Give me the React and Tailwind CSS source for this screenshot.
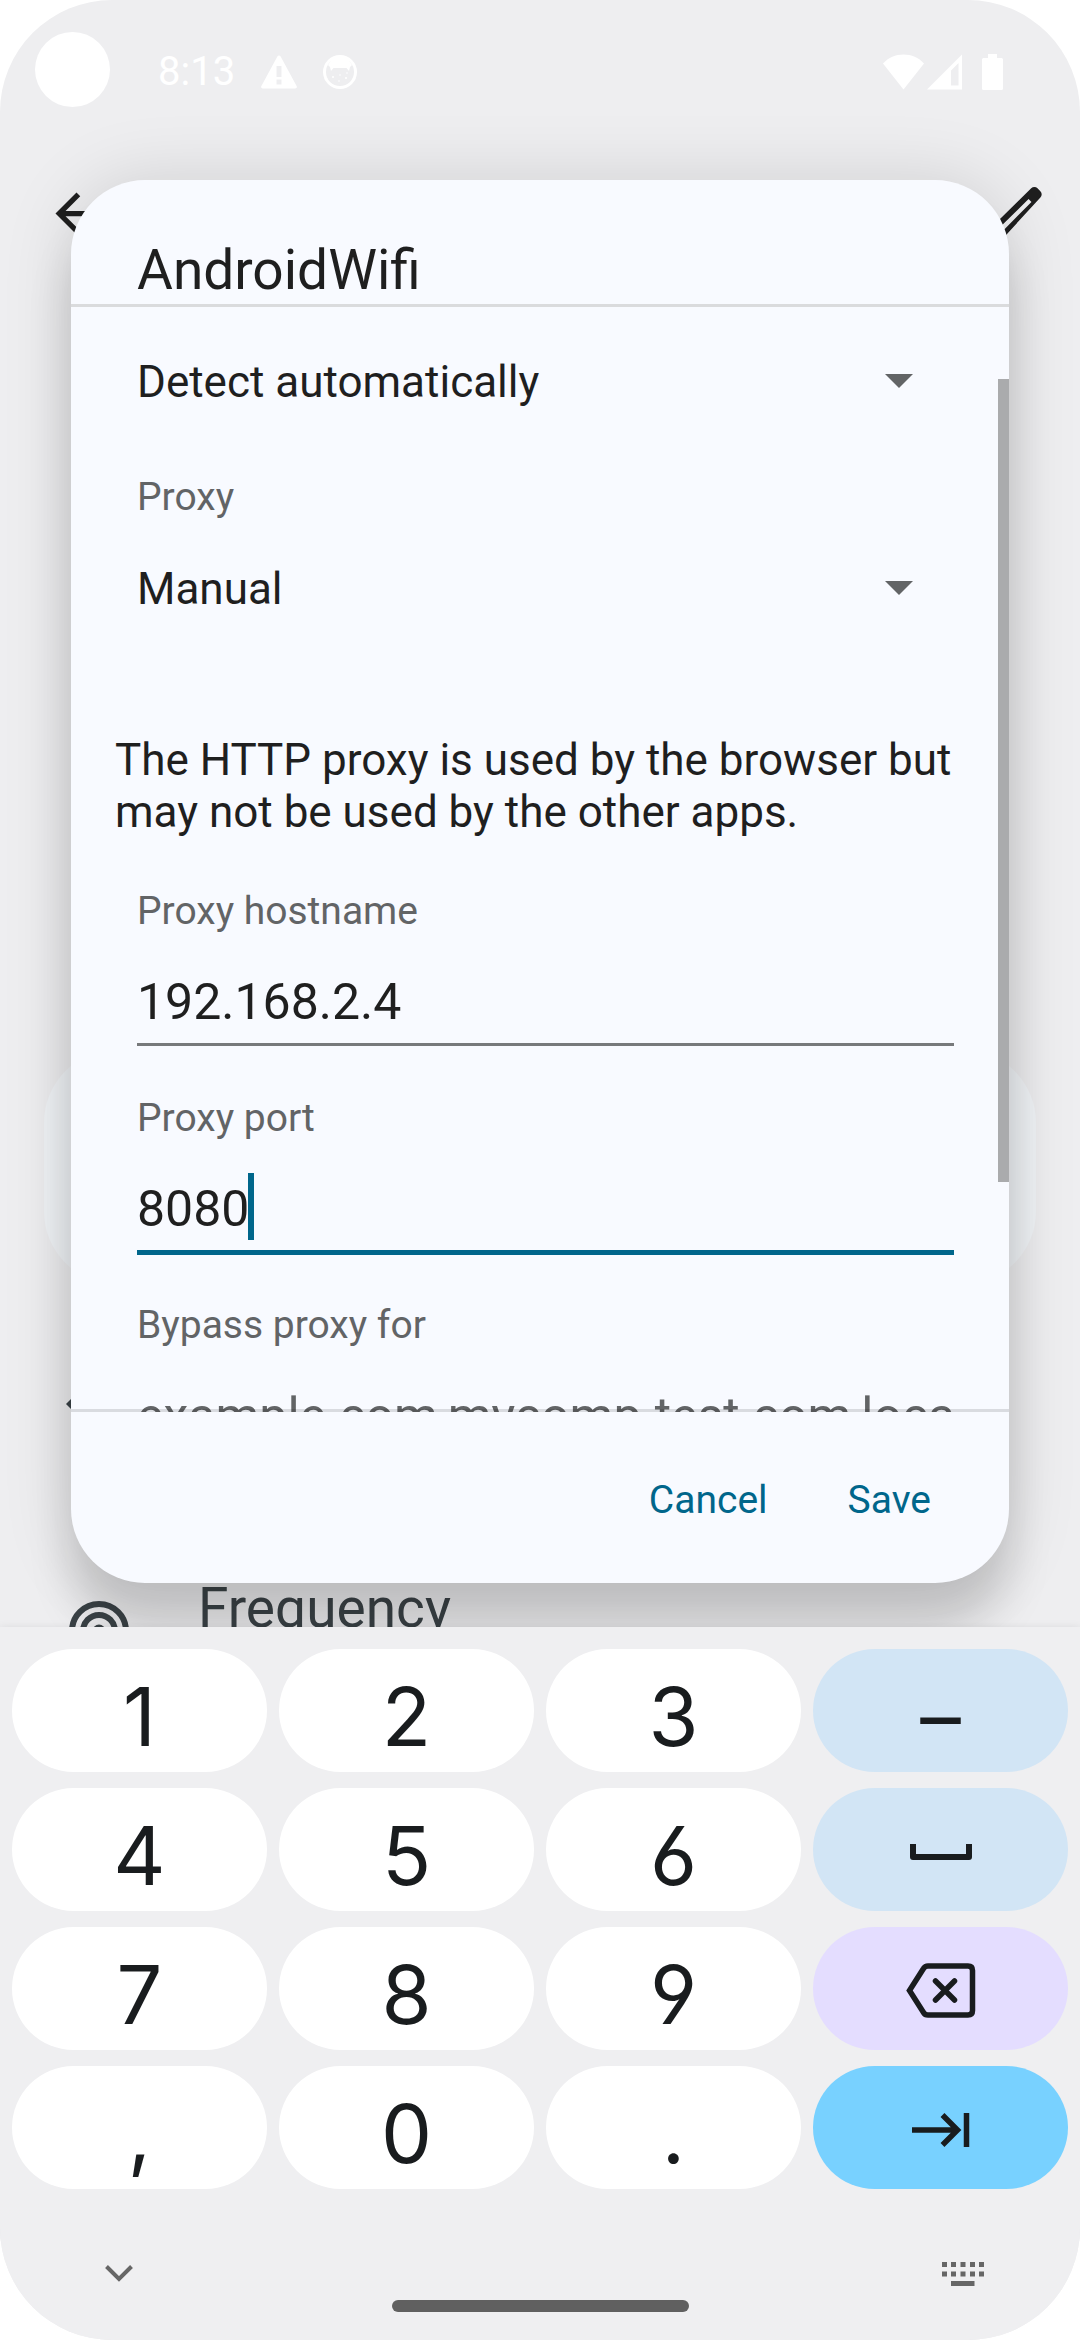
import React from "react";

function StatusBar() {
  return (
    <div className="flex h-[144px] shrink-0 items-center pl-[35px] pr-[77px] text-white">
      <div className="mt-[32px] size-[75px] shrink-0 self-start rounded-full bg-white" />
      <span className="ml-[48px] text-[40px] leading-[48px]">8:13</span>
      <svg className="ml-[26px] h-[34px] w-[36px]" viewBox="0 0 36 34" fill="currentColor" aria-hidden="true">
        <path
          fillRule="evenodd"
          d="M16.500 1.200a1.800 1.800 0 0 1 3 0L35.600 31c.7 1.400 0 2.400-1.400 2.400H1.800C.4 33.400-.3 32.400.4 31ZM15.500 11v11h5V11Zm0 13.500v5h5v-5Z"
        />
      </svg>
      <svg className="ml-[26px] size-[34px]" viewBox="0 0 34 34" fill="currentColor" aria-hidden="true">
        <circle cx="17" cy="17" r="15.500" fill="none" stroke="currentColor" strokeWidth="3" />
        <path d="M5 10 9 4 17 2l8 2 4 6-2 2-1 4-2.500-3h-13L8 16l-1-4Z" />
        <circle cx="10" cy="22" r="1" />
        <circle cx="17" cy="20" r=".8" />
        <circle cx="23" cy="23" r="1" />
        <circle cx="16" cy="26" r=".8" />
        <circle cx="24" cy="18" r=".8" />
      </svg>
      <div className="ml-auto flex items-center">
        <svg className="h-[36px] w-[41px]" viewBox="0 0 41 36" fill="currentColor" aria-hidden="true">
          <path d="M0 9.500C5.500 3.500 12.500.5 20.500.5S35.500 3.500 41 9.500L20.500 35.500Z" />
        </svg>
        <svg className="ml-[3px] h-[36px] w-[35px]" viewBox="0 0 35 36" fill="currentColor" aria-hidden="true">
          <path fillRule="evenodd" d="M35 .5V35.500H0ZM31.500 9 24 16.500V31.500h7.500Z" />
        </svg>
        <svg className="ml-[20px] h-[36px] w-[21px]" viewBox="0 0 21 36" fill="currentColor" aria-hidden="true">
          <path d="M6 0h9v4h4.500A1.500 1.500 0 0 1 21 5.500v29a1.500 1.500 0 0 1-1.500 1.500h-18A1.500 1.500 0 0 1 0 34.500v-29A1.500 1.500 0 0 1 1.500 4H6Z" />
        </svg>
      </div>
    </div>
  );
}

function NetworkDetailsPage() {
  return (
    <div className="flex min-h-0 flex-col overflow-hidden text-[#3b4347] [grid-area:1/1]">
      <StatusBar />
      <div className="flex h-[138px] shrink-0 items-center justify-between pl-[45px] pr-[32px] text-[#1f1f1f]">
        <button type="button" aria-label="Back">
          <svg className="size-[63px]" viewBox="0 0 24 24" fill="currentColor" aria-hidden="true">
            <path d="M20 11H7.830l5.590-5.590L12 4l-8 8 8 8 1.410-1.410L7.830 13H20Z" />
          </svg>
        </button>
        <button type="button" aria-label="Edit">
          <svg className="size-[63px]" viewBox="0 0 24 24" fill="currentColor" aria-hidden="true">
            <path
              fillRule="evenodd"
              d="M3 21v-4.250L17.600 2.400a1.700 1.700 0 0 1 2.400 0l1.100 1.100a1.700 1.700 0 0 1 0 2.400L7.250 21ZM5 19h1.400L17.700 7.600 16.600 6.500 5 17.900Z"
            />
          </svg>
        </button>
      </div>
      <div className="mx-[44px] mt-[767px] h-[236px] shrink-0 rounded-[74px] bg-[#f1f4f7]" />
      <div className="mt-[85px] flex h-[68px] shrink-0 items-center pl-[66px]">
        <svg className="size-[64px]" viewBox="0 0 64 64" fill="currentColor" aria-hidden="true">
          <path d="M0 32 32 0l32 32-32 32Z" />
        </svg>
      </div>
      <div className="mt-[138px] flex h-[110px] shrink-0 items-start gap-[69px] pl-[69px]">
        <svg className="mt-[25px] size-[60px]" viewBox="0 0 60 60" aria-hidden="true">
          <g fill="none" stroke="currentColor" strokeWidth="6">
            <circle cx="30" cy="30" r="27" />
            <circle cx="30" cy="30" r="16" />
          </g>
          <circle cx="30" cy="30" r="6.500" fill="currentColor" />
        </svg>
        <span className="text-[55px] leading-[64px]">Frequency</span>
      </div>
    </div>
  );
}

function Dropdown({ id, label, value }) {
  return (
    <div className="relative">
      <select
        id={id}
        aria-label={label}
        defaultValue={value}
        className="h-[100px] w-full appearance-none bg-transparent text-[44px] text-[#1f1f1f] outline-none"
      >
        <option>{value}</option>
      </select>
      <svg
        className="pointer-events-none absolute right-[41px] top-[42px] h-[14px] w-[28px]"
        viewBox="0 0 28 14"
        fill="#626466"
        aria-hidden="true"
      >
        <path d="M0 0h28L14 14Z" />
      </svg>
    </div>
  );
}

function Field({ id, label, value, placeholder, active }) {
  return (
    <div className="h-[207px] shrink-0">
      <label htmlFor={id} className="block text-[39px] leading-[50px] text-[#626466]">
        {label}
      </label>
      <div className="relative mt-[25px]">
        <input
          id={id}
          type="text"
          defaultValue={value}
          placeholder={placeholder}
          className={
            "block w-full bg-transparent text-[50px] text-[#1f1f1f] outline-none placeholder:text-[#626466] " +
            (active ? "h-[87px] border-b-[5px] border-[#00668b]" : "h-[85px] border-b-[3px] border-[#77797b]")
          }
        />
        {active && <span className="absolute left-[111px] top-[5px] h-[67px] w-[6px] bg-[#00668b]" />}
      </div>
    </div>
  );
}

function ProxyDialog() {
  return (
    <div
      role="dialog"
      aria-labelledby="dialog-title"
      className="relative z-10 mx-[71px] mb-[44px] mt-[180px] flex min-h-0 flex-col overflow-hidden rounded-[74px] bg-[#f8faff] shadow-[0_0_70px_rgba(0,0,0,0.13),0_48px_44px_rgba(0,0,0,0.15)] [grid-area:1/1]"
    >
      <header className="shrink-0 border-b-[3px] border-[#dadbdd] px-[66px] pb-[2px] pt-[58px]">
        <h1 id="dialog-title" className="text-[55px] leading-[64px] text-[#1f1f1f]">
          AndroidWifi
        </h1>
      </header>
      <div className="relative min-h-0 flex-1 overflow-hidden">
        <div className="flex flex-col pl-[66px] pr-[55px] pt-[25px]">
          <Dropdown id="metered" label="Metered" value="Detect automatically" />
          <label htmlFor="proxy" className="mb-[17px] mt-[40px] block text-[39px] leading-[50px] text-[#626466]">
            Proxy
          </label>
          <Dropdown id="proxy" label="Proxy" value="Manual" />
          <p className="-ml-[22px] mb-[48px] mt-[95px] text-[44px] leading-[52px] text-[#1f1f1f]">
            The HTTP proxy is used by the browser but may not be used by the other apps.
          </p>
          <Field id="hostname" label="Proxy hostname" value="192.168.2.4" />
          <Field id="port" label="Proxy port" value="8080" active />
          <Field id="bypass" label="Bypass proxy for" placeholder="example.com,mycomp.test.com,localhost" />
        </div>
        <div className="absolute right-0 top-[72px] h-[803px] w-[11px] bg-[#aaabad]" />
      </div>
      <footer className="relative -mt-[3px] flex h-[174px] shrink-0 items-center justify-end gap-[32px] border-t-[3px] border-black/12 pr-[54px] pt-[6px] text-[39px] text-[#00668b]">
        <button type="button" className="h-[96px] px-[24px]">
          Cancel
        </button>
        <button type="button" className="h-[96px] px-[24px]">
          Save
        </button>
      </footer>
    </div>
  );
}

function SpaceIcon() {
  return (
    <svg className="h-[16px] w-[62px]" viewBox="0 0 62 16" aria-hidden="true">
      <path d="M3 0v13h56V0" fill="none" stroke="currentColor" strokeWidth="6" strokeLinejoin="round" />
    </svg>
  );
}

function BackspaceIcon() {
  return (
    <svg className="h-[55px] w-[70px]" viewBox="0 0 70 55" fill="none" stroke="currentColor" strokeWidth="5.500" aria-hidden="true">
      <path d="M3.500 27.500 17.500 5.500Q19 3 22 3H62Q66.500 3 66.500 7.500V47.500Q66.500 52 62 52H22Q19 52 17.500 49.500Z" />
      <path d="M29.500 18 48.500 37M48.500 18 29.500 37" strokeLinecap="round" />
    </svg>
  );
}

function NextIcon() {
  return (
    <svg className="h-[34px] w-[60px]" viewBox="0 0 60 34" fill="none" stroke="currentColor" strokeWidth="5.500" aria-hidden="true">
      <path d="M1 17H46M31.500 2 46.500 17 31.500 32M55.500 0V34" />
    </svg>
  );
}

const KEYS = [
  ["1", "2", "3", "–"],
  ["4", "5", "6", "space"],
  ["7", "8", "9", "backspace"],
  [",", "0", ".", "next"],
];

const KEY_COLORS = {
  "–": "bg-[#d2e5f5]",
  space: "bg-[#d2e5f5]",
  backspace: "bg-[#e4ddff]",
  next: "bg-[#78d1ff]",
};

const KEY_ICONS = { space: <SpaceIcon />, backspace: <BackspaceIcon />, next: <NextIcon /> };

function Keyboard() {
  return (
    <div className="z-20 shrink-0 bg-[#efeff1] px-[12px] pt-[22px] shadow-[0_0_8px_rgba(0,0,0,0.08)]">
      <div className="grid grid-cols-4 gap-x-[12px] gap-y-[16px] font-['Inter',sans-serif] text-[81px] text-[#191c1e] [font-feature-settings:'cv03','cv04']">
        {KEYS.flat().map((key) => (
          <button
            key={key}
            type="button"
            aria-label={key}
            className={
              "flex h-[123px] items-center justify-center rounded-full pt-[4px] " + (KEY_COLORS[key] || "bg-white")
            }
          >
            {KEY_ICONS[key] || <span className="pt-[8px] leading-[100px]">{key}</span>}
          </button>
        ))}
      </div>
      <div className="grid h-[151px] grid-cols-3 items-start px-[84px] text-[#666]">
        <button type="button" aria-label="Hide keyboard" className="mt-[76px] justify-self-start pl-[9px]">
          <svg className="h-[17px] w-[28px]" viewBox="0 0 28 17" fill="none" stroke="currentColor" strokeWidth="4" aria-hidden="true">
            <path d="M1.500 1.500 14 14 26.500 1.500" />
          </svg>
        </button>
        <div className="mt-[111px] h-[12px] w-[297px] justify-self-center rounded-full bg-[#606060]" />
        <button type="button" aria-label="Switch keyboard" className="mt-[73px] justify-self-end">
          <svg className="h-[24px] w-[42px]" viewBox="0 0 42 24" fill="currentColor" aria-hidden="true">
            <path d="M0 0h5v5H0ZM9 0h5v5H9ZM18.500 0h5v5h-5ZM28 0h5v5h-5ZM37 0h5v5h-5ZM0 9.500h5v5H0ZM9 9.500h5v5H9ZM18.500 9.500h5v5h-5ZM28 9.500h5v5h-5ZM37 9.500h5v5h-5ZM9 19h23.500v5H9Z" />
          </svg>
        </button>
      </div>
    </div>
  );
}

export default function App() {
  return (
    <div className="h-screen bg-white">
      <main className="flex h-full flex-col overflow-hidden rounded-[112px] bg-[#eeeef0] font-['Roboto',sans-serif]">
        <div className="grid min-h-0 flex-1 grid-cols-1 grid-rows-[minmax(0,1fr)]">
          <NetworkDetailsPage />
          <ProxyDialog />
        </div>
        <Keyboard />
      </main>
    </div>
  );
}
